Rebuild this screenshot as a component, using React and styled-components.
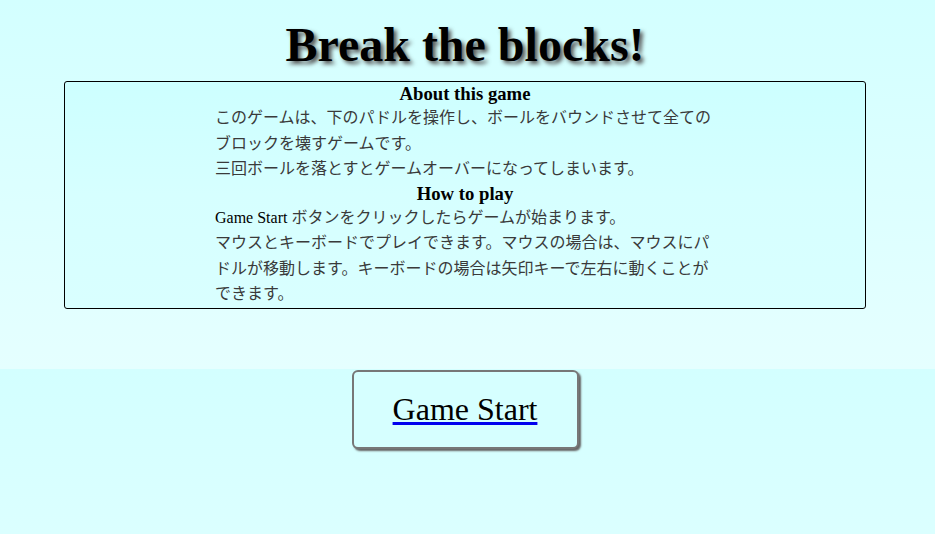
import React from 'react';
import styled, { createGlobalStyle } from 'styled-components';

const GlobalStyle = createGlobalStyle`
  html {
    background: linear-gradient(#d3ffff, #e5ffff) repeat-y;
    background-size: 100% 369px;
    min-height: 100%;
  }

  body {
    margin: 0;
    font-family: "Liberation Serif", "Noto Sans CJK JP", serif;
    color: #000;
  }
`;

const Page = styled.div`
  padding: 8px 10px 8px 5px;
  display: flex;
  flex-direction: column;
  align-items: center;
`;

const Title = styled.h1`
  margin: 9px 0;
  font-size: 48px;
  font-weight: 700;
  line-height: 55px;
  text-shadow: 3px 3px 4px #555;
`;

const InfoBox = styled.section`
  box-sizing: border-box;
  width: 802px;
  padding-bottom: 1px;
  border: 1px solid #000;
  border-radius: 3px;
  background: linear-gradient(#cdffff, #d6ffff 50%, #d9ffff);
`;

const InfoColumn = styled.div`
  width: 500px;
  margin: 0 auto;
`;

const SectionTitle = styled.h3`
  margin: 0;
  font-size: 18.72px;
  line-height: 23px;
  font-weight: 700;
  text-align: center;
`;

const Text = styled.p`
  margin: 0;
  font-size: 16px;
  line-height: 25.5px;
  color: #3a3a3a;
`;

const Latin = styled.span`
  color: #000;
`;

const StartButton = styled.div`
  box-sizing: border-box;
  width: 227px;
  height: 79px;
  margin-top: 61px;
  display: flex;
  align-items: center;
  justify-content: center;
  border: 2px solid #777;
  border-radius: 6px;
  box-shadow: 2px 2px 2px #666;
  background: #d6ffff;
  cursor: pointer;
`;

const StartLink = styled.a`
  font-size: 32px;
  line-height: 37px;
  color: #000;
  text-decoration: underline;
  text-decoration-color: #0000ee;
  text-decoration-thickness: 3px;
  text-underline-offset: 2px;
`;

const App = () => {
  return (
    <>
      <GlobalStyle />
      <Page>
        <Title>Break the blocks!</Title>

        <InfoBox>
          <SectionTitle>About this game</SectionTitle>
          <InfoColumn>
            <Text>
              このゲームは、下のパドルを操作し、ボールをバウンドさせて全てのブロックを壊すゲームです。
            </Text>
            <Text>三回ボールを落とすとゲームオーバーになってしまいます。</Text>
          </InfoColumn>

          <SectionTitle>How to play</SectionTitle>
          <InfoColumn>
            <Text>
              <Latin>Game Start</Latin> ボタンをクリックしたらゲームが始まります。
            </Text>
            <Text>
              マウスとキーボードでプレイできます。マウスの場合は、マウスにパドルが移動します。キーボードの場合は矢印キーで左右に動くことができます。
            </Text>
          </InfoColumn>
        </InfoBox>

        <StartButton>
          <StartLink href="#" onClick={(e) => e.preventDefault()}>
            Game Start
          </StartLink>
        </StartButton>
      </Page>
    </>
  );
};

export default App;
